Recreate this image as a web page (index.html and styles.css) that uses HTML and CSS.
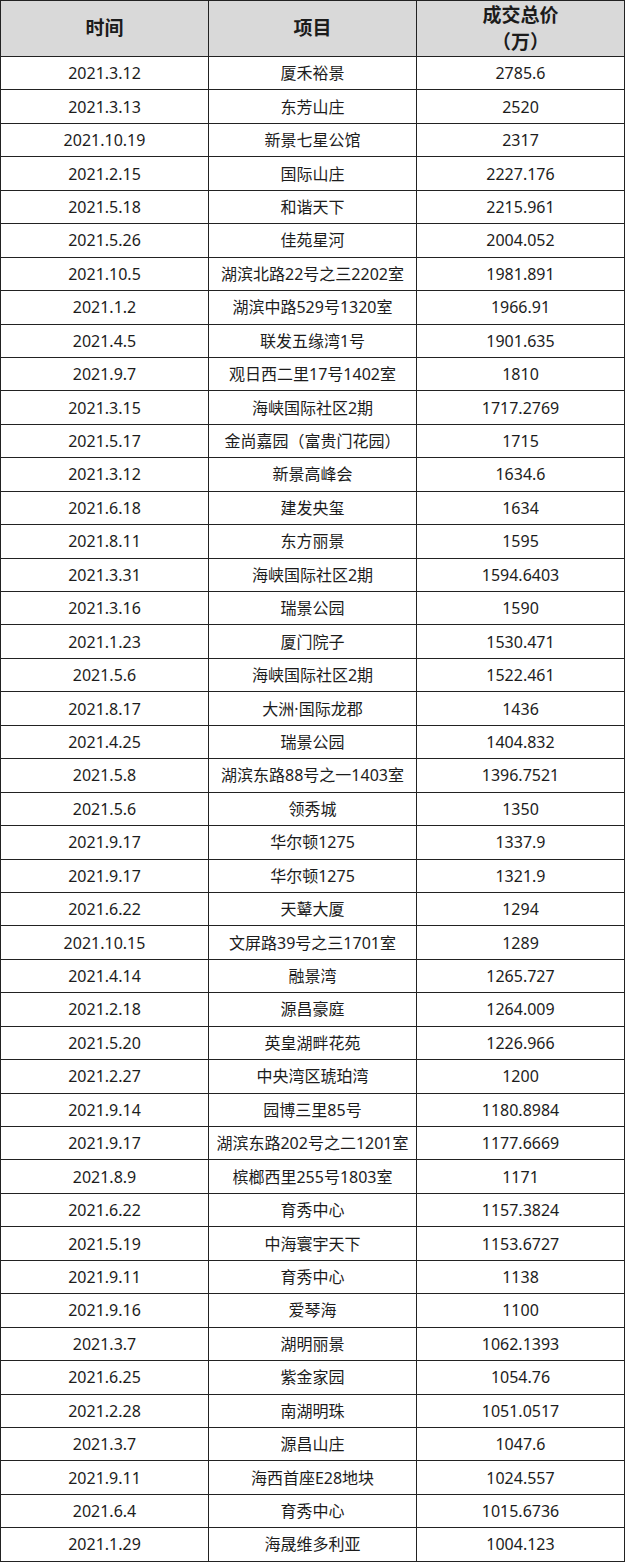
FILE: index.html
```html
<!DOCTYPE html>
<html lang="zh-CN">
<head>
<meta charset="utf-8">
<title>成交总价</title>
<link rel="stylesheet" href="styles.css">
</head>
<body>
<table class="deals">
  <colgroup><col class="c1"><col class="c2"><col class="c3"></colgroup>
  <thead>
    <tr><th>时间</th><th>项目</th><th>成交总价<br>（万）</th></tr>
  </thead>
  <tbody>
    <tr><td>2021.3.12</td><td>厦禾裕景</td><td>2785.6</td></tr>
    <tr><td>2021.3.13</td><td>东芳山庄</td><td>2520</td></tr>
    <tr><td>2021.10.19</td><td>新景七星公馆</td><td>2317</td></tr>
    <tr><td>2021.2.15</td><td>国际山庄</td><td>2227.176</td></tr>
    <tr><td>2021.5.18</td><td>和谐天下</td><td>2215.961</td></tr>
    <tr><td>2021.5.26</td><td>佳苑星河</td><td>2004.052</td></tr>
    <tr><td>2021.10.5</td><td>湖滨北路22号之三2202室</td><td>1981.891</td></tr>
    <tr><td>2021.1.2</td><td>湖滨中路529号1320室</td><td>1966.91</td></tr>
    <tr><td>2021.4.5</td><td>联发五缘湾1号</td><td>1901.635</td></tr>
    <tr><td>2021.9.7</td><td>观日西二里17号1402室</td><td>1810</td></tr>
    <tr><td>2021.3.15</td><td>海峡国际社区2期</td><td>1717.2769</td></tr>
    <tr><td>2021.5.17</td><td>金尚嘉园（富贵门花园）</td><td>1715</td></tr>
    <tr><td>2021.3.12</td><td>新景高峰会</td><td>1634.6</td></tr>
    <tr><td>2021.6.18</td><td>建发央玺</td><td>1634</td></tr>
    <tr><td>2021.8.11</td><td>东方丽景</td><td>1595</td></tr>
    <tr><td>2021.3.31</td><td>海峡国际社区2期</td><td>1594.6403</td></tr>
    <tr><td>2021.3.16</td><td>瑞景公园</td><td>1590</td></tr>
    <tr><td>2021.1.23</td><td>厦门院子</td><td>1530.471</td></tr>
    <tr><td>2021.5.6</td><td>海峡国际社区2期</td><td>1522.461</td></tr>
    <tr><td>2021.8.17</td><td>大洲·国际龙郡</td><td>1436</td></tr>
    <tr><td>2021.4.25</td><td>瑞景公园</td><td>1404.832</td></tr>
    <tr><td>2021.5.8</td><td>湖滨东路88号之一1403室</td><td>1396.7521</td></tr>
    <tr><td>2021.5.6</td><td>领秀城</td><td>1350</td></tr>
    <tr><td>2021.9.17</td><td>华尔顿1275</td><td>1337.9</td></tr>
    <tr><td>2021.9.17</td><td>华尔顿1275</td><td>1321.9</td></tr>
    <tr><td>2021.6.22</td><td>天鼙大厦</td><td>1294</td></tr>
    <tr><td>2021.10.15</td><td>文屏路39号之三1701室</td><td>1289</td></tr>
    <tr><td>2021.4.14</td><td>融景湾</td><td>1265.727</td></tr>
    <tr><td>2021.2.18</td><td>源昌豪庭</td><td>1264.009</td></tr>
    <tr><td>2021.5.20</td><td>英皇湖畔花苑</td><td>1226.966</td></tr>
    <tr><td>2021.2.27</td><td>中央湾区琥珀湾</td><td>1200</td></tr>
    <tr><td>2021.9.14</td><td>园博三里85号</td><td>1180.8984</td></tr>
    <tr><td>2021.9.17</td><td>湖滨东路202号之二1201室</td><td>1177.6669</td></tr>
    <tr><td>2021.8.9</td><td>槟榔西里255号1803室</td><td>1171</td></tr>
    <tr><td>2021.6.22</td><td>育秀中心</td><td>1157.3824</td></tr>
    <tr><td>2021.5.19</td><td>中海寰宇天下</td><td>1153.6727</td></tr>
    <tr><td>2021.9.11</td><td>育秀中心</td><td>1138</td></tr>
    <tr><td>2021.9.16</td><td>爱琴海</td><td>1100</td></tr>
    <tr><td>2021.3.7</td><td>湖明丽景</td><td>1062.1393</td></tr>
    <tr><td>2021.6.25</td><td>紫金家园</td><td>1054.76</td></tr>
    <tr><td>2021.2.28</td><td>南湖明珠</td><td>1051.0517</td></tr>
    <tr><td>2021.3.7</td><td>源昌山庄</td><td>1047.6</td></tr>
    <tr><td>2021.9.11</td><td>海西首座E28地块</td><td>1024.557</td></tr>
    <tr><td>2021.6.4</td><td>育秀中心</td><td>1015.6736</td></tr>
    <tr><td>2021.1.29</td><td>海晟维多利亚</td><td>1004.123</td></tr>
  </tbody>
</table>
</body>
</html>
```

FILE: styles.css
```css
html, body {
  margin: 0;
  padding: 0;
  background: #ffffff;
}

.deals {
  width: 625px;
  border-collapse: collapse;
  table-layout: fixed;
  font-family: "Noto Sans", "Noto Sans CJK SC", sans-serif;
  color: #1c1c1c;
}

.deals col.c1,
.deals col.c2 { width: 208px; }

.deals th,
.deals td {
  border: 1px solid #222222;
  padding: 0;
  text-align: center;
  vertical-align: middle;
  white-space: nowrap;
}

.deals th {
  background: #d9d9d9;
  font-size: 19px;
  font-weight: 700;
  line-height: 27px;
  height: 55px;
}

.deals td {
  font-size: 16px;
  font-weight: 400;
  line-height: 20px;
  height: 32.45px;
}
```
